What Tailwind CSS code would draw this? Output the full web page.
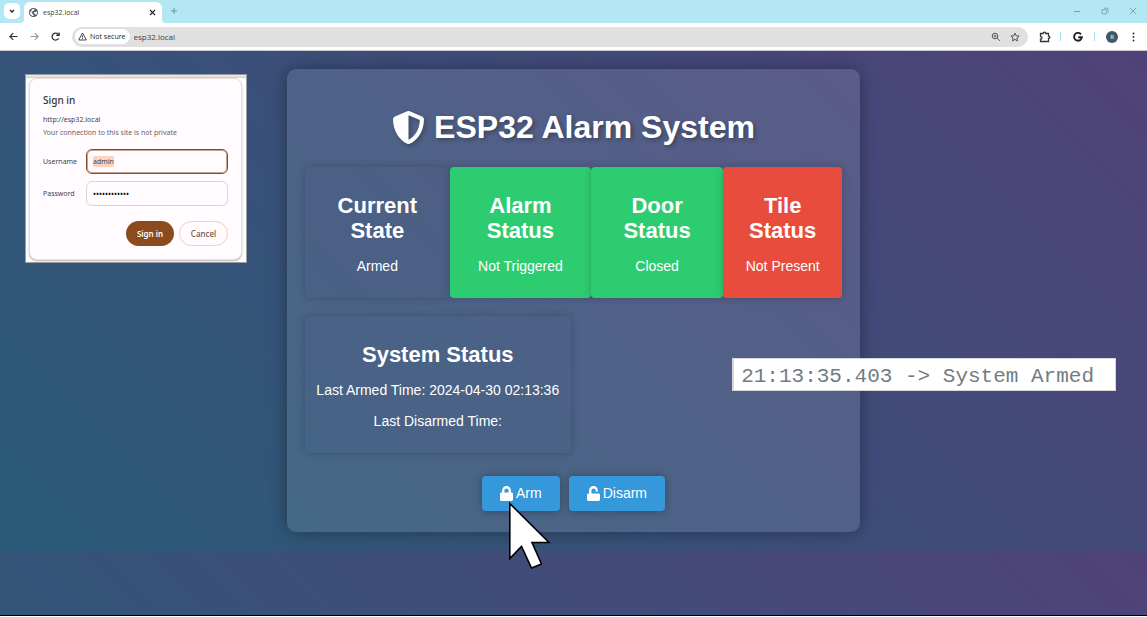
<!DOCTYPE html>
<html lang="en">
<head>
<meta charset="utf-8">
<title>esp32.local</title>
<script src="https://cdn.jsdelivr.net/npm/@tailwindcss/browser@4"></script>
</head>
<body class="flex h-screen flex-col overflow-hidden bg-white font-['Liberation_Sans',Arial,sans-serif]">
<header class="shrink-0 font-['Open_Sans',sans-serif] text-[#3a3f44]">
  <div class="flex h-[23px] items-end bg-[#b3e7f3]">
    <button aria-label="Search tabs" class="mb-1 ml-1 flex size-4 items-center justify-center rounded-[5px] bg-white">
      <svg class="size-2" viewBox="0 0 8 8" fill="none" stroke="#222" stroke-width="1.3"><path d="M2 3l2 2 2-2"/></svg>
    </button>
    <svg class="size-1" viewBox="0 0 4 4"><path d="M4 0v4H0a4 4 0 0 0 4-4z" fill="#fff"/></svg>
    <div class="flex h-[21px] w-[138px] items-center rounded-t-md bg-white pr-1 pl-[5px]">
      <svg class="size-[9px]" viewBox="0 0 18 18"><circle cx="9" cy="9" r="9" fill="#50555a"/><path d="M2 7l4 2 1 3 2 1v3C5 16 1 12 2 7zM7 2h4v2L9 6H7v2L4 7l1-3zM10 8h4l2-2c1 4 0 7-3 8l-1-3h-2z" fill="#fff"/></svg>
      <span class="ml-[5px] text-[7px] leading-3">esp32.local</span>
      <button aria-label="Close tab" class="ml-auto flex size-3 items-center justify-center">
        <svg class="size-[7px]" viewBox="0 0 7 7" stroke="#222" stroke-width="1.1"><path d="M1 1l5 5M6 1L1 6"/></svg>
      </button>
    </div>
    <svg class="size-1" viewBox="0 0 4 4"><path d="M0 0v4h4a4 4 0 0 1-4-4z" fill="#fff"/></svg>
    <button aria-label="New tab" class="mb-2 ml-1">
      <svg class="size-2" viewBox="0 0 8 8" stroke="#6d989f" stroke-width="1"><path d="M4 1v6M1 4h6"/></svg>
    </button>
    <div class="mr-2.5 mb-2 ml-auto flex gap-5">
      <button aria-label="Minimize"><svg class="size-2" viewBox="0 0 8 8" stroke="#7a9ea6"><path d="M1 4.500h6"/></svg></button>
      <button aria-label="Restore"><svg class="size-2" viewBox="0 0 8 8" fill="none" stroke="#7a9ea6" stroke-width=".9"><rect x="1" y="2.500" width="4.500" height="4.500" rx="1"/><path d="M3 1.200h3q1 0 1 1v3"/></svg></button>
      <button aria-label="Close"><svg class="size-2" viewBox="0 0 8 8" stroke="#7a9ea6" stroke-width=".9"><path d="M1 1l6 6M7 1L1 7"/></svg></button>
    </div>
  </div>
  <div class="flex h-7 items-center border-b border-[#c9c9cc] bg-white pr-[10px] pl-2">
    <div class="flex w-16 gap-[10px]">
      <button aria-label="Back"><svg class="size-[11px]" viewBox="0 0 11 11" fill="none" stroke="#333" stroke-width="1.200"><path d="M9.500 5.500H2M5.200 2.200L1.900 5.500l3.300 3.300"/></svg></button>
      <button aria-label="Forward"><svg class="size-[11px]" viewBox="0 0 11 11" fill="none" stroke="#999" stroke-width="1.100"><path d="M1.500 5.500H9M5.800 2.200l3.300 3.300-3.300 3.300"/></svg></button>
      <button aria-label="Reload"><svg class="size-[11px]" viewBox="0 0 11 11" fill="none" stroke="#333" stroke-width="1.300"><path d="M8.700 7.200A3.500 3.500 0 1 1 8.200 3.200L9 4"/><path d="M9.100 1.500v2.900H6.200"/></svg></button>
    </div>
    <div class="flex h-5 flex-1 items-center rounded-full bg-[#e0e0e0] pr-2 pl-[3px]">
      <button class="flex h-[15px] items-center gap-[3px] rounded-full bg-white pr-1 pl-[3px] text-[7px] leading-3 font-medium text-[#222]">
        <svg class="size-[9px]" viewBox="0 0 9 9" fill="none" stroke="#333" stroke-width=".9"><path d="M4.500 1L8.300 8H.7z"/><path d="M4.500 3.500v2M4.500 6.200v.9"/></svg>Not secure</button>
      <input aria-label="Address" value="esp32.local" class="ml-1 h-4 min-w-0 flex-1 bg-transparent text-[8px] leading-3">
      <button aria-label="Zoom"><svg class="size-[10px]" viewBox="0 0 10 10" fill="none" stroke="#555"><circle cx="4" cy="4" r="2.800"/><path d="M6 6l3 3M2.700 4h2.600M4 2.700v2.600" stroke-width=".9"/></svg></button>
      <button aria-label="Bookmark" class="ml-[9px]"><svg class="size-[10px]" viewBox="0 0 24 24" fill="none" stroke="#555" stroke-width="2.400"><path d="M12 2.500l2.800 6.600 7.200.6-5.500 4.700 1.700 7L12 17.700l-6.200 3.700 1.700-7L2 9.700l7.200-.6z"/></svg></button>
    </div>
    <div class="ml-[11px] flex items-center">
      <button aria-label="Extensions"><svg class="size-3" viewBox="0 0 12 12" fill="none" stroke="#333" stroke-width="1.300"><path d="M1.500 2.500h2.700c0-1.800 2.600-1.800 2.600 0h2.700v2.600c1.800 0 1.800 2.400 0 2.400v3h-8V8.200c1.900 0 1.900-2.600 0-2.600z"/></svg></button>
      <span class="ml-[9px] h-[9px] w-px bg-[#a9e2ee]"></span>
      <button aria-label="Google" class="ml-3"><svg class="size-[10px]" viewBox="0 0 10 10" fill="none" stroke="#222" stroke-width="1.900"><path d="M8 2.300A3.900 3.900 0 1 0 8.900 5.200H5.200"/></svg></button>
      <span class="ml-[11px] h-[9px] w-px bg-[#a9e2ee]"></span>
      <button aria-label="Profile" class="ml-[11px] size-3 rounded-full bg-[#435863] text-center text-[6px] leading-3 text-white">R</button>
      <button aria-label="Menu" class="ml-3"><svg class="h-[10px] w-[7px]" viewBox="0 0 7 10" fill="#222"><circle cx="3.500" cy="1.500" r=".9"/><circle cx="3.500" cy="5" r=".9"/><circle cx="3.500" cy="8.500" r=".9"/></svg></button>
    </div>
  </div>
</header>

<main class="relative mb-px flex-1 border-b border-black bg-[linear-gradient(45deg,#295b78,#504279)] bg-[length:100%_500px] bg-repeat-y pt-[18px] text-white">
  <section class="mx-auto w-1/2 rounded-[9px] bg-[#f0ffff]/11 px-[18px] pt-[38px] pb-[21px] text-center shadow-[0_0_18px_rgba(0,0,0,0.35)]">
    <h1 class="flex items-center justify-center gap-[9px] text-[32px] leading-10 font-bold text-shadow-[2px_2px_4px_rgba(0,0,0,0.3)]">
      <svg class="size-[33px] drop-shadow-[2px_2px_2px_rgba(0,0,0,0.25)]" viewBox="0 0 512 512" fill="#fff"><path fill-rule="evenodd" d="M466.500 83.700l-192-80a48.150 48.150 0 0 0-36.900 0l-192 80C27.700 91.100 16 108.600 16 128c0 198.500 114.500 335.700 221.500 380.300 11.800 4.900 25.100 4.900 36.900 0C360.100 472.600 496 349.300 496 128c0-19.400-11.700-36.900-29.500-44.300zM256.100 446.300l-.1-381 175.900 73.300c-3.300 151.400-82.100 261.100-175.800 307.700z"/></svg>
      ESP32 Alarm System
    </h1>
    <div class="mt-5 grid grid-cols-[145fr_141fr_132fr_119fr]">
      <article class="rounded bg-[#485b80]/30 px-4 pt-[26px] pb-[23px] shadow-[0_0_9px_rgba(0,0,0,0.2)]"><h2 class="text-[22px] leading-[25px] font-bold">Current<br>State</h2><p class="mt-[14px] text-[14px] leading-[18px]">Armed</p></article>
      <article class="rounded bg-[#2ecc71] px-4 pt-[26px] pb-[23px] shadow-[0_0_9px_rgba(0,0,0,0.2)]"><h2 class="text-[22px] leading-[25px] font-bold">Alarm<br>Status</h2><p class="mt-[14px] text-[14px] leading-[18px]">Not Triggered</p></article>
      <article class="rounded bg-[#2ecc71] px-4 pt-[26px] pb-[23px] shadow-[0_0_9px_rgba(0,0,0,0.2)]"><h2 class="text-[22px] leading-[25px] font-bold">Door<br>Status</h2><p class="mt-[14px] text-[14px] leading-[18px]">Closed</p></article>
      <article class="rounded bg-[#e74c3c] px-4 pt-[26px] pb-[23px] shadow-[0_0_9px_rgba(0,0,0,0.2)]"><h2 class="text-[22px] leading-[25px] font-bold">Tile<br>Status</h2><p class="mt-[14px] text-[14px] leading-[18px]">Not Present</p></article>
    </div>
    <article class="mt-[18px] w-[49.5%] rounded bg-[#485b80]/20 pt-[26px] pb-[23px] whitespace-nowrap shadow-[0_0_9px_rgba(0,0,0,0.2)]">
      <h2 class="text-[22px] leading-[25px] font-bold">System Status</h2>
      <p class="mt-[14px] text-[14px] leading-[18px]">Last Armed Time: 2024-04-30 02:13:36</p>
      <p class="mt-[13px] text-[14px] leading-[18px]">Last Disarmed Time:</p>
    </article>
    <div class="mt-[23px] flex justify-center gap-[9px]">
      <button class="flex h-[35px] items-center gap-[3px] rounded bg-[#3498db] px-[18px] text-[14px] shadow-[0_0_9px_rgba(0,0,0,0.3)]">
        <svg class="h-[15px] w-[13px]" viewBox="0 0 448 512" fill="#fff"><path d="M400 224h-24v-72C376 68.200 307.800 0 224 0S72 68.200 72 152v72H48c-26.500 0-48 21.500-48 48v192c0 26.500 21.500 48 48 48h352c26.500 0 48-21.500 48-48V272c0-26.500-21.500-48-48-48zm-104 0H152v-72c0-39.700 32.300-72 72-72s72 32.300 72 72v72z"/></svg>Arm</button>
      <button class="flex h-[35px] items-center gap-[3px] rounded bg-[#3498db] px-[18px] text-[14px] shadow-[0_0_9px_rgba(0,0,0,0.3)]">
        <svg class="h-[15px] w-[13px]" viewBox="0 0 448 512" fill="#fff"><path d="M400 256H152V152.900c0-39.600 31.700-72.500 71.300-72.900 40-.4 72.700 32.100 72.700 72v16c0 13.300 10.700 24 24 24h32c13.300 0 24-10.700 24-24v-16C376 68 307.500-.3 223.500 0 139.500.3 72 69.500 72 153.500V256H48c-26.500 0-48 21.500-48 48v160c0 26.500 21.500 48 48 48h352c26.500 0 48-21.500 48-48V304c0-26.500-21.500-48-48-48z"/></svg>Disarm</button>
    </div>
  </section>

  <!-- Login prompt floating over the page -->
  <div class="absolute top-[23px] left-[25px] w-[222px] border border-[#999da2] bg-white pr-1 pb-[2px] pl-[3px] font-['Noto_Sans',sans-serif] text-[#444]">
    <div class="-mr-1 -ml-[3px] h-[3px] border-b border-[#d0d0d0] bg-[#e4e4e4]"></div>
    <form class="rounded-lg border border-[#eeddd6] bg-[#fffbff] px-[13px] pt-[14px] pb-[13px] text-[7px] leading-[13px] shadow-[0_1px_2px_rgba(0,0,0,0.3)]">
      <h2 class="text-[10px] leading-[14px] font-medium text-[#333]">Sign in</h2>
      <p class="mt-[6px]">http://esp32.local</p>
      <p class="text-[#666]">Your connection to this site is not private</p>
      <div class="mt-[10px] grid grid-cols-[43px_1fr] items-center gap-y-[7px]">
        <label for="u">Username</label>
        <div class="flex h-[25px] items-center rounded-md border border-[#8b4b1c] px-[6px] ring-1 ring-[#8b4b1c]/50 ring-inset"><input id="u" value="admin" class="field-sizing-content bg-[#fbd5c0] text-[7px] leading-[11px] outline-none"></div>
        <label for="p">Password</label>
        <input id="p" type="password" value="abcdefghijkl" class="h-[25px] min-w-0 rounded-md border border-[#dcd3d3] px-[6px] text-[8px] text-black">
      </div>
      <div class="mt-[15px] flex justify-end gap-[5px] text-[8px] font-semibold">
        <button type="button" class="h-[25px] w-12 rounded-full bg-[#8b4b1c] text-white">Sign in</button>
        <button type="button" class="h-[25px] w-[49px] rounded-full border border-[#f6cdb8] font-medium text-[#75513d]">Cancel</button>
      </div>
    </form>
  </div>

  <!-- Serial monitor line -->
  <output class="absolute top-[307px] right-[31px] border border-l-2 border-[#d5d8dd] bg-white pt-1 pr-[21px] pl-[7px] font-['Liberation_Mono',monospace] text-[21px] leading-[27px] whitespace-pre text-[#717c82]">21:13:35.403 -&gt; System Armed</output>

  <!-- Pointer -->
  <svg class="absolute top-[450px] left-[508px] h-[68px] w-[43px]" viewBox="0 0 43 68"><path d="M1.800 2.500V57.500L13.500 45.500 23.500 67 33.500 63 24 41.500H41z" fill="#fff" stroke="#000" stroke-width="1.600"/></svg>
</main>
</body>
</html>
